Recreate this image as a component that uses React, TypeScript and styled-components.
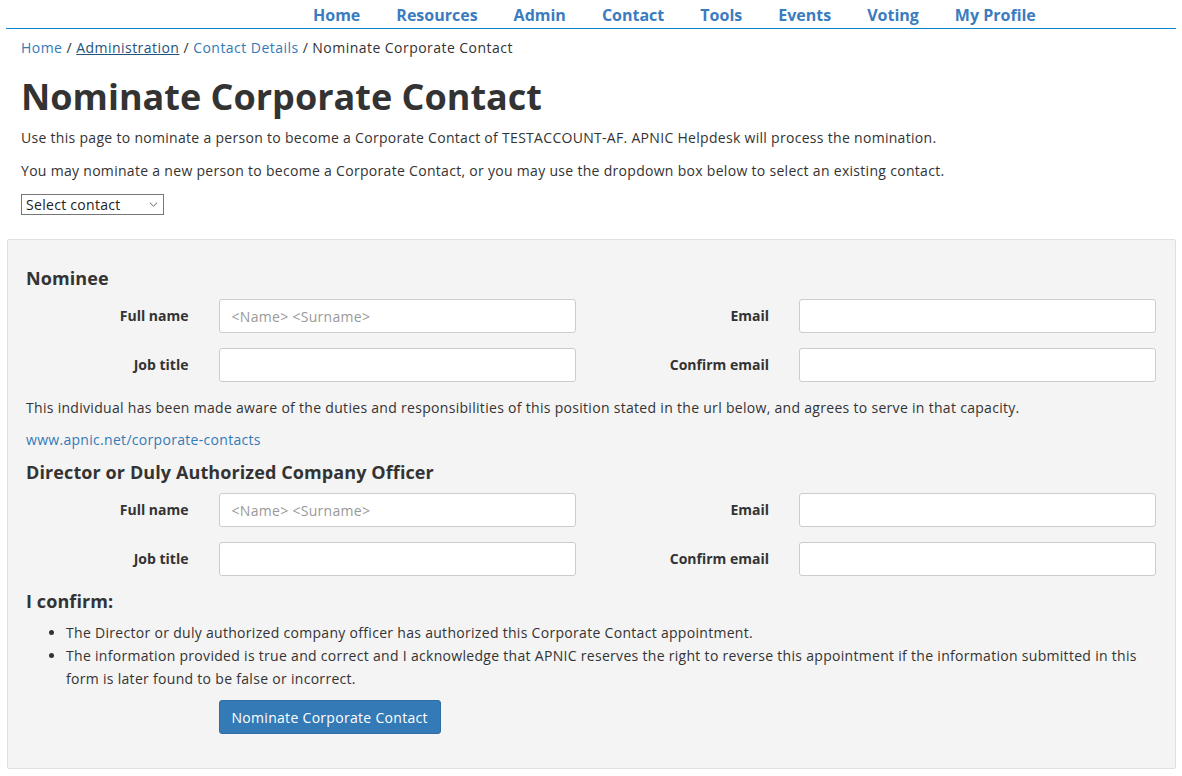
import React from "react";
import styled, { createGlobalStyle } from "styled-components";

const GlobalStyle = createGlobalStyle`
  html, body { margin: 0; padding: 0; background: #fff; }
  body {
    font-family: "Open Sans", "Noto Sans", sans-serif;
    font-size: 14px;
    letter-spacing: 0.3px;
    color: #333;
  }
  * { box-sizing: border-box; }
`;

const Page = styled.div`
  padding: 0 6px 8px 7px;
`;

const NavBar = styled.nav`
  display: flex;
  height: 29px;
  border-bottom: 1px solid #0b84c9;
  padding-left: 289px;
  margin-left: -1px;
`;

const NavItem = styled.a`
  font-size: 16px;
  font-weight: 700;
  letter-spacing: 0;
  color: #3b7cc0;
  text-decoration: none;
  line-height: 29px;
  padding: 1px 18px 0;
`;

const Intro = styled.div`
  padding-left: 14px;
`;

const Breadcrumb = styled.div`
  margin-top: 9px;
  line-height: 20px;
  letter-spacing: 0.46px;
  color: #333;
`;

const Crumb = styled.a<{ $underline?: boolean }>`
  color: ${(p) => (p.$underline ? "#23527c" : "#337ab7")};
  text-decoration: ${(p) => (p.$underline ? "underline" : "none")};
`;

const Title = styled.h1`
  margin: 17px 0 0;
  font-size: 36px;
  line-height: 44px;
  font-weight: 700;
  letter-spacing: 0;
  color: #333;
`;

const Para = styled.p<{ $top: number }>`
  margin: ${(p) => p.$top}px 0 0;
  line-height: 20px;
`;

const SelectWrap = styled.div`
  position: relative;
  margin-top: 13px;
  width: 143px;
  height: 21px;
`;

const Select = styled.select`
  appearance: none;
  width: 143px;
  height: 21px;
  border: 1px solid #767676;
  border-radius: 0;
  background: #fff;
  font-family: inherit;
  font-size: 14px;
  letter-spacing: 0.3px;
  color: #222;
  padding: 0 0 0 4px;
  line-height: 19px;
`;

const Chevron = styled.svg`
  position: absolute;
  right: 6px;
  top: 8px;
  pointer-events: none;
`;

const Panel = styled.section`
  margin-top: 24px;
  background: #f4f4f4;
  border: 1px solid #e0e0e0;
  border-radius: 2px;
  padding: 26px 18px 34px;
`;

const SectionTitle = styled.h3<{ $top?: number }>`
  margin: ${(p) => p.$top ?? 0}px 0 0;
  font-size: 18px;
  line-height: 24px;
  font-weight: 700;
  letter-spacing: 0.1px;
  color: #333;
`;

const FormGrid = styled.div`
  margin: 9px -14px 0 -16px;
  display: grid;
  grid-template-columns: 1fr 2fr 1fr 2fr;
  row-gap: 15px;
`;

const Label = styled.label`
  padding: 0 15px;
  text-align: right;
  font-weight: 700;
  letter-spacing: 0;
  line-height: 34px;
`;

const Cell = styled.div`
  padding: 0 15px;
`;

const Input = styled.input`
  width: 100%;
  height: 34px;
  border: 1px solid #ccc;
  border-radius: 3px;
  background: #fff;
  padding: 0 12px;
  font-family: inherit;
  font-size: 14px;
  letter-spacing: 0.3px;
  color: #555;
  &::placeholder { color: #999; }
`;

const Note = styled.p<{ $top: number }>`
  margin: ${(p) => p.$top}px 0 0;
  line-height: 20px;
`;

const Link = styled.a`
  color: #337ab7;
  text-decoration: none;
`;

const List = styled.ul`
  margin: 8px 0 0;
  padding-left: 40px;
  line-height: 23px;
`;

const ButtonRow = styled.div`
  margin: 10px -14px 0 -16px;
  display: grid;
  grid-template-columns: 1fr 5fr;
`;

const ButtonCell = styled.div`
  grid-column: 2;
  padding: 0 15px;
`;

const Button = styled.button`
  height: 34px;
  padding: 0 12px;
  background: #337ab7;
  border: 1px solid #2e6da4;
  border-radius: 3px;
  color: #fff;
  font-family: inherit;
  font-size: 14px;
  letter-spacing: 0.3px;
`;

const navItems = ["Home", "Resources", "Admin", "Contact", "Tools", "Events", "Voting", "My Profile"];

function ContactFields() {
  return (
    <FormGrid>
      <Label>Full name</Label>
      <Cell><Input placeholder="<Name> <Surname>" /></Cell>
      <Label>Email</Label>
      <Cell><Input /></Cell>
      <Label>Job title</Label>
      <Cell><Input /></Cell>
      <Label>Confirm email</Label>
      <Cell><Input /></Cell>
    </FormGrid>
  );
}

export default function App() {
  return (
    <Page>
      <GlobalStyle />
      <NavBar>
        {navItems.map((n) => (
          <NavItem key={n} href="#">{n}</NavItem>
        ))}
      </NavBar>
      <Intro>
        <Breadcrumb>
          <Crumb href="#">Home</Crumb> / <Crumb href="#" $underline>Administration</Crumb> /{" "}
          <Crumb href="#">Contact Details</Crumb> / Nominate Corporate Contact
        </Breadcrumb>
        <Title>Nominate Corporate Contact</Title>
        <Para $top={9}>
          Use this page to nominate a person to become a Corporate Contact of TESTACCOUNT-AF. APNIC Helpdesk will process the nomination.
        </Para>
        <Para $top={13}>
          You may nominate a new person to become a Corporate Contact, or you may use the dropdown box below to select an existing contact.
        </Para>
        <SelectWrap>
          <Select defaultValue="">
            <option value="">Select contact</option>
          </Select>
          <Chevron width="9" height="5" viewBox="0 0 9 5">
            <path d="M0.8 0.6 L4.5 4.2 L8.2 0.6" fill="none" stroke="#666" strokeWidth="1" />
          </Chevron>
        </SelectWrap>
      </Intro>
      <Panel>
        <SectionTitle>Nominee</SectionTitle>
        <ContactFields />
        <Note $top={16}>
          This individual has been made aware of the duties and responsibilities of this position stated in the url below, and agrees to serve in that capacity.
        </Note>
        <Note $top={12}>
          <Link href="#">www.apnic.net/corporate-contacts</Link>
        </Note>
        <SectionTitle $top={10}>Director or Duly Authorized Company Officer</SectionTitle>
        <ContactFields />
        <SectionTitle $top={13}>I confirm:</SectionTitle>
        <List>
          <li>The Director or duly authorized company officer has authorized this Corporate Contact appointment.</li>
          <li>
            The information provided is true and correct and I acknowledge that APNIC reserves the right to reverse this appointment if the information submitted in this form is later found to be false or incorrect.
          </li>
        </List>
        <ButtonRow>
          <ButtonCell>
            <Button type="button">Nominate Corporate Contact</Button>
          </ButtonCell>
        </ButtonRow>
      </Panel>
    </Page>
  );
}
